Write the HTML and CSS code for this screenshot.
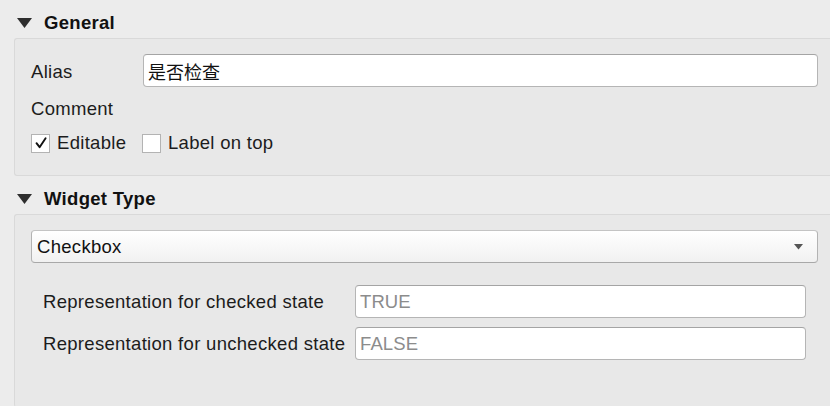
FILE: index.html
```html
<!DOCTYPE html>
<html>
<head>
<meta charset="utf-8">
<link rel="stylesheet" href="styles.css">
</head>
<body>
<div class="page">
  <div class="section-header">
    <svg class="caret" width="15" height="10" viewBox="0 0 15 10"><polygon points="0,0 15,0 7.5,10" fill="#2e2e2e"/></svg>
    <span class="section-title">General</span>
  </div>
  <div class="group group-general">
    <div class="row row-alias">
      <span class="label label-alias">Alias</span>
      <div class="field field-alias"><span class="value">是否检查</span></div>
    </div>
    <div class="row row-comment">
      <span class="label">Comment</span>
    </div>
    <div class="row row-checks">
      <div class="check-item check-editable">
        <span class="checkbox">
          <svg width="14" height="14" viewBox="0 0 14 14"><path d="M2.5 7.2 L5.6 11.2 L11.6 2.2" fill="none" stroke="#111" stroke-width="1.9" stroke-linecap="round" stroke-linejoin="round"/></svg>
        </span>
        <span class="label">Editable</span>
      </div>
      <div class="check-item">
        <span class="checkbox"></span>
        <span class="label">Label on top</span>
      </div>
    </div>
  </div>
  <div class="section-header">
    <svg class="caret" width="15" height="10" viewBox="0 0 15 10"><polygon points="0,0 15,0 7.5,10" fill="#2e2e2e"/></svg>
    <span class="section-title">Widget Type</span>
  </div>
  <div class="group group-widget">
    <div class="combo">
      <span class="value">Checkbox</span>
      <svg class="combo-arrow" width="9" height="6" viewBox="0 0 9 6"><polygon points="0,0 9,0 4.5,5.5" fill="#555"/></svg>
    </div>
    <div class="rep">
      <div class="rep-row">
        <span class="label rep-label">Representation for checked state</span>
        <div class="field field-rep"><span class="placeholder">TRUE</span></div>
      </div>
      <div class="rep-row">
        <span class="label rep-label">Representation for unchecked state</span>
        <div class="field field-rep"><span class="placeholder">FALSE</span></div>
      </div>
    </div>
  </div>
</div>
</body>
</html>
```

FILE: styles.css
```css
html, body {
  margin: 0;
  padding: 0;
  background: #ececec;
  width: 830px;
  height: 406px;
  overflow: hidden;
}
body {
  font-family: "Liberation Sans", Arial, "Noto Sans CJK SC", sans-serif;
  font-size: 18.5px;
  letter-spacing: 0.3px;
  color: #1c1c1c;
}
.page {
  display: flex;
  flex-direction: column;
  padding-left: 14px;
}
.section-header {
  display: flex;
  align-items: center;
  height: 30px;
  padding-top: 8px;
}
.caret {
  margin-left: 3px;
  margin-right: 12px;
  flex: none;
}
.section-title {
  font-weight: bold;
  font-size: 18.5px;
  letter-spacing: 0.3px;
  color: #111;
}
.group {
  background: #e8e8e8;
  border: 1px solid #d9d9d9;
  border-right: none;
  border-radius: 3px 0 0 3px;
  padding: 15px 12px 0 16px;
  display: flex;
  flex-direction: column;
}
.group-general {
  height: 121px;
}
.group-widget {
  height: 177px;
  border-bottom: none;
}
.row {
  display: flex;
  align-items: center;
}
.row-alias {
  height: 33px;
}
.label-alias {
  width: 112px;
  flex: none;
  padding-top: 2px;
}
.field {
  background: #fff;
  border: 1px solid #b5b5b5;
  border-top-color: #a4a4a4;
  border-radius: 4px;
  box-sizing: border-box;
  display: flex;
  align-items: center;
}
.field-alias {
  flex: 1;
  height: 33px;
  padding-left: 4px;
}
.field-alias .value {
  font-family: "Noto Sans CJK SC", sans-serif;
  font-size: 18px;
  letter-spacing: 0;
  color: #111;
}
.row-comment {
  height: 24px;
  margin-top: 10px;
}
.row-checks {
  height: 22px;
  margin-top: 11px;
}
.check-item {
  display: flex;
  align-items: center;
}
.check-editable {
  width: 111px;
}
.checkbox {
  width: 19px;
  height: 19px;
  box-sizing: border-box;
  background: #fff;
  border: 1px solid #b3b3b3;
  margin-right: 7px;
  display: flex;
  align-items: center;
  justify-content: center;
  flex: none;
}
.combo {
  height: 33px;
  box-sizing: border-box;
  border: 1px solid #b3b3b3;
  border-top-color: #c4c4c4;
  border-bottom-color: #a8a8a8;
  border-radius: 4px;
  background: linear-gradient(#ffffff, #f1f1f1);
  display: flex;
  align-items: center;
  justify-content: space-between;
  padding: 0 14px 0 5px;
}
.combo .value {
  color: #111;
}
.rep {
  display: flex;
  flex-direction: column;
  gap: 9px;
  padding: 22px 12px 0 12px;
}
.rep-row {
  display: flex;
  align-items: center;
  height: 33px;
}
.rep-label {
  width: 312px;
  flex: none;
  padding-top: 1px;
}
.field-rep {
  flex: 1;
  height: 33px;
  padding-left: 4px;
}
.placeholder {
  color: #8c8c8c;
  letter-spacing: 0.1px;
}
```
